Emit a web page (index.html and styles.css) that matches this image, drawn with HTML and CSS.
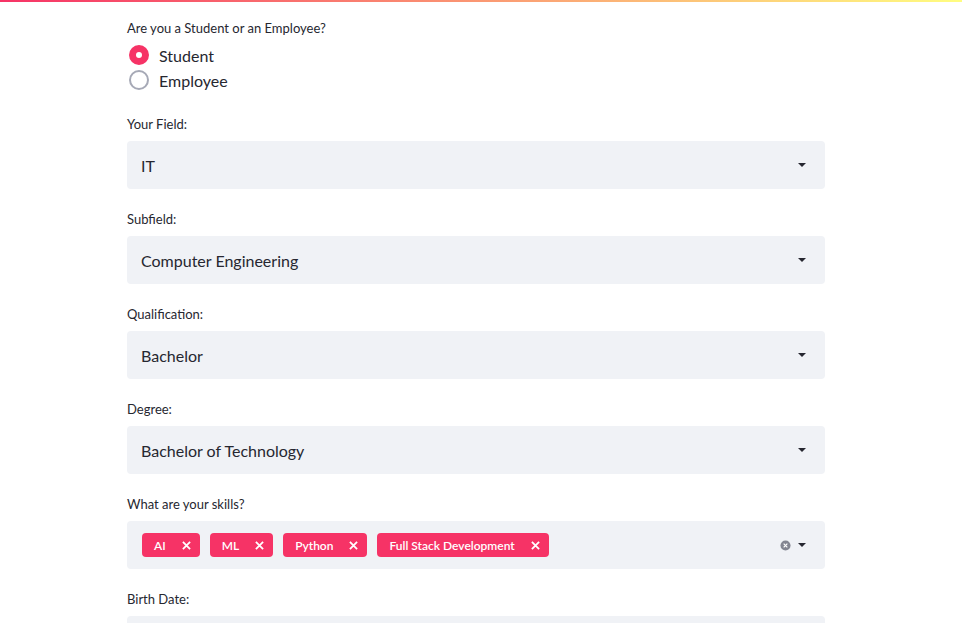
FILE: index.html
```html
<!DOCTYPE html>
<html>
<head>
<meta charset="utf-8">
<link rel="stylesheet" href="styles.css">
</head>
<body>
<div class="decoration"></div>
<main class="block">
  <div class="radio-widget">
    <div class="label">Are you a Student or an Employee?</div>
    <div class="radio-group">
      <div class="radio-item"><span class="radio checked"></span><span>Student</span></div>
      <div class="radio-item"><span class="radio"></span><span>Employee</span></div>
    </div>
  </div>

  <div class="field">
    <div class="label">Your Field:</div>
    <div class="select"><span class="value">IT</span><span class="caret"></span></div>
  </div>
  <div class="field">
    <div class="label">Subfield:</div>
    <div class="select"><span class="value">Computer Engineering</span><span class="caret"></span></div>
  </div>
  <div class="field">
    <div class="label">Qualification:</div>
    <div class="select"><span class="value">Bachelor</span><span class="caret"></span></div>
  </div>
  <div class="field">
    <div class="label">Degree:</div>
    <div class="select"><span class="value">Bachelor of Technology</span><span class="caret"></span></div>
  </div>
  <div class="field">
    <div class="label">What are your skills?</div>
    <div class="select multi">
      <div class="tags">
        <span class="tag">AI<svg viewBox="0 0 10 10"><path d="M1 1L9 9M9 1L1 9"/></svg></span>
        <span class="tag">ML<svg viewBox="0 0 10 10"><path d="M1 1L9 9M9 1L1 9"/></svg></span>
        <span class="tag">Python<svg viewBox="0 0 10 10"><path d="M1 1L9 9M9 1L1 9"/></svg></span>
        <span class="tag">Full Stack Development<svg viewBox="0 0 10 10"><path d="M1 1L9 9M9 1L1 9"/></svg></span>
      </div>
      <div class="controls">
        <svg class="clear" viewBox="0 0 12 12"><circle cx="6" cy="6" r="5.5"/><path d="M4 4L8 8M8 4L4 8"/></svg>
        <span class="caret"></span>
      </div>
    </div>
  </div>
  <div class="field">
    <div class="label">Birth Date:</div>
    <div class="select"></div>
  </div>
</main>
</body>
</html>
```
FILE: styles.css
```css
html, body {
  margin: 0;
  padding: 0;
  background: #ffffff;
  overflow: hidden;
}
body {
  font-family: "Lato", "Liberation Sans", sans-serif;
  color: rgb(38, 39, 48);
  height: 623px;
}
.decoration {
  height: 2px;
  background: linear-gradient(90deg, rgb(246, 51, 102), rgb(255, 253, 128));
}
.block {
  width: 698px;
  margin-left: 127px;
  padding-top: 16px;
}
.label {
  font-size: 13px;
  line-height: 20px;
  height: 20px;
  margin-bottom: 7px;
}
.radio-widget .label {
  margin-bottom: 6px;
}
.radio-group {
  display: flex;
  flex-direction: column;
  gap: 3px;
  padding-left: 2px;
  margin-bottom: 23px;
}
.radio-item {
  display: flex;
  align-items: center;
  gap: 10px;
  font-size: 16px;
  height: 22px;
}
.radio {
  width: 20px;
  height: 20px;
  border-radius: 50%;
  box-sizing: border-box;
  border: 2px solid rgb(166, 169, 182);
  background: #fff;
  position: relative;
}
.radio.checked {
  background: rgb(246, 51, 102);
  border-color: rgb(246, 51, 102);
}
.radio.checked::after {
  content: "";
  position: absolute;
  left: 50%;
  top: 50%;
  width: 6px;
  height: 6px;
  margin: -3px 0 0 -3px;
  border-radius: 50%;
  background: #fff;
}
.field {
  margin-bottom: 20px;
}
.select {
  height: 48px;
  background: rgb(240, 242, 246);
  border-radius: 4px;
  display: flex;
  align-items: center;
  justify-content: space-between;
  padding: 0 19px 0 14px;
  box-sizing: border-box;
  font-size: 16px;
}
.caret {
  width: 0;
  height: 0;
  border-left: 4px solid transparent;
  border-right: 4px solid transparent;
  border-top: 4px solid rgb(38, 39, 48);
}
.multi {
  padding-left: 15px;
}
.tags {
  display: flex;
  gap: 10px;
}
.tag {
  display: inline-flex;
  align-items: center;
  height: 24px;
  background: rgb(246, 51, 102);
  color: #fff;
  border-radius: 4px;
  font-size: 12px;
  font-weight: 600;
  padding: 0 9px 0 12px;
  gap: 16px;
}
.tag svg {
  width: 9px;
  height: 9px;
  stroke: #fff;
  stroke-width: 2;
  fill: none;
}
.controls {
  display: flex;
  align-items: center;
  gap: 7px;
}
.clear {
  width: 11px;
  height: 11px;
}
.clear circle {
  fill: rgb(131, 133, 145);
}
.clear path {
  stroke: #fff;
  stroke-width: 1.3;
}
```
